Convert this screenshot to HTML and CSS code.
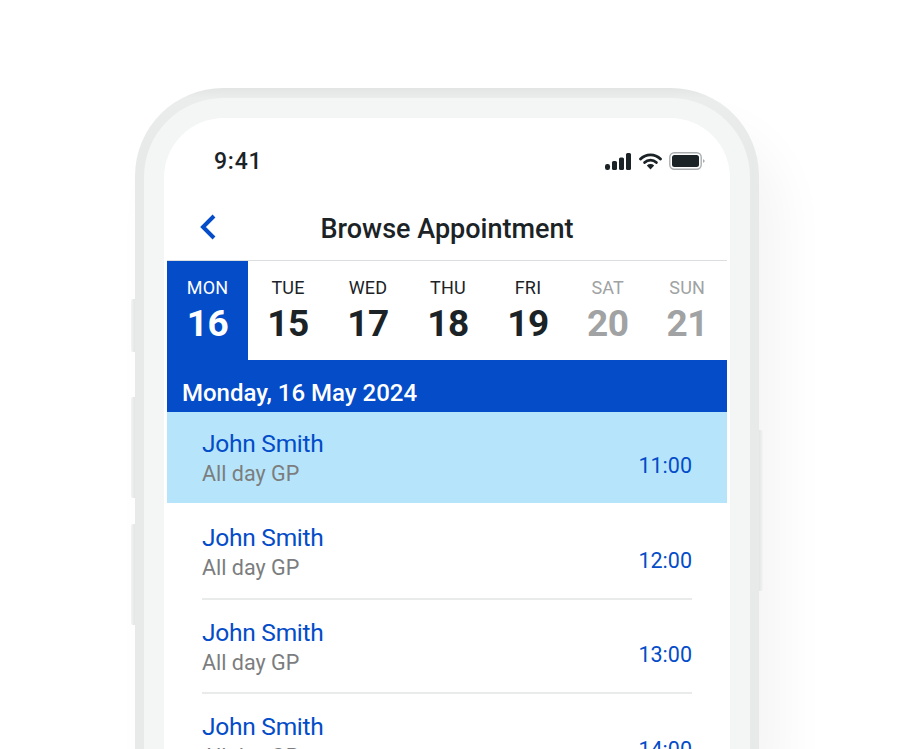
FILE: index.html
```html
<!DOCTYPE html>
<html lang="en">
<head>
    <meta charset="UTF-8">
    <meta name="viewport" content="width=device-width, initial-scale=1.0">
    <title>Browse Appointment</title>
    <link rel="stylesheet" href="styles.css">
</head>
<body>
    <div class="phone">
        <span class="side-button side-mute"></span>
        <span class="side-button side-up"></span>
        <span class="side-button side-down"></span>
        <span class="side-button side-power"></span>
        <div class="bezel">
            <div class="screen">
                <div class="status-bar">
                    <span class="clock">9:41</span>
                    <div class="status-icons">
                        <svg width="27" height="17" viewBox="0 0 27 17">
                            <rect x="0" y="11" width="5" height="6" rx="2.2" fill="#1b2327"/>
                            <rect x="7" y="8" width="5" height="9" rx="1.5" fill="#1b2327"/>
                            <rect x="14" y="4.5" width="5" height="12.5" rx="1.5" fill="#1b2327"/>
                            <rect x="21" y="0" width="5" height="17" rx="1.5" fill="#1b2327"/>
                        </svg>
                        <svg width="23" height="17" viewBox="0 0 23 17">
                            <path d="M1.5 6 A14 14 0 0 1 21.5 6" fill="none" stroke="#1b2327" stroke-width="2.8" stroke-linecap="round"/>
                            <path d="M5.6 9.6 A8.5 8.5 0 0 1 17.4 9.6" fill="none" stroke="#1b2327" stroke-width="2.8" stroke-linecap="round"/>
                            <path d="M7.8 12.4 L11.5 16.6 L15.2 12.4 A5.4 5.4 0 0 0 7.8 12.4 Z" fill="#1b2327"/>
                        </svg>
                        <svg width="36" height="18" viewBox="0 0 36 18">
                            <rect x="0.8" y="0.8" width="31.4" height="16.4" rx="4.5" fill="none" stroke="#a9adae" stroke-width="1.4"/>
                            <rect x="3" y="3" width="27" height="12" rx="2.5" fill="#1b2327"/>
                            <path d="M34 7 L36 9 L34 11 Z" fill="#a9adae"/>
                        </svg>
                    </div>
                </div>

                <div class="title-bar">
                    <svg class="back" width="18" height="28" viewBox="0 0 18 28">
                        <path d="M15 3 L4 14 L15 25" fill="none" stroke="#044cc8" stroke-width="4"/>
                    </svg>
                    <h1>Browse Appointment</h1>
                </div>

                <div class="content">
                    <div class="week">
                        <div class="day active"><span class="day-name">MON</span><span class="day-num">16</span></div>
                        <div class="day"><span class="day-name">TUE</span><span class="day-num">15</span></div>
                        <div class="day"><span class="day-name">WED</span><span class="day-num">17</span></div>
                        <div class="day"><span class="day-name">THU</span><span class="day-num">18</span></div>
                        <div class="day"><span class="day-name">FRI</span><span class="day-num">19</span></div>
                        <div class="day weekend"><span class="day-name">SAT</span><span class="day-num">20</span></div>
                        <div class="day weekend"><span class="day-name">SUN</span><span class="day-num">21</span></div>
                    </div>

                    <div class="date-band">Monday, 16 May 2024</div>

                    <div class="slot selected">
                        <div class="slot-info">
                            <div class="doctor">John Smith</div>
                            <div class="speciality">All day GP</div>
                        </div>
                        <div class="time">11:00</div>
                    </div>
                    <div class="slot">
                        <div class="slot-info">
                            <div class="doctor">John Smith</div>
                            <div class="speciality">All day GP</div>
                        </div>
                        <div class="time">12:00</div>
                    </div>
                    <div class="slot">
                        <div class="slot-info">
                            <div class="doctor">John Smith</div>
                            <div class="speciality">All day GP</div>
                        </div>
                        <div class="time">13:00</div>
                    </div>
                    <div class="slot">
                        <div class="slot-info">
                            <div class="doctor">John Smith</div>
                            <div class="speciality">All day GP</div>
                        </div>
                        <div class="time">14:00</div>
                    </div>
                </div>
            </div>
        </div>
    </div>
</body>
</html>
```

FILE: styles.css
```css
body {
    margin: 0;
    height: 749px;
    overflow: hidden;
    background-color: #fff;
    font-family: Roboto, "Liberation Sans", sans-serif;
    color: #1b2327;
}

.phone {
    position: relative;
    box-sizing: border-box;
    width: 624px;
    height: 661px;
    margin: 88px 0 0 135px;
    padding: 10px 9px 0;
    background: linear-gradient(to bottom, #e3e5e5, #ebecec 10px, #e8e9e9 60px);
    border-radius: 88px 88px 0 0;
    box-shadow: 24px 40px 50px rgba(0,0,0,0.045);
}

.side-button {
    position: absolute;
    width: 4px;
}

.side-mute, .side-up, .side-down {
    left: -4px;
    background: linear-gradient(to right, #f3f4f4, #e3e4e4);
    border-radius: 2px 0 0 2px;
}

.side-mute {
    top: 211px;
    height: 53px;
}

.side-up {
    top: 309px;
    height: 101px;
}

.side-down {
    top: 436px;
    height: 101px;
}

.side-power {
    right: -4px;
    top: 342px;
    height: 161px;
    background: linear-gradient(to right, #e3e4e4, #f3f4f4);
    border-radius: 0 2px 2px 0;
}

.bezel {
    box-sizing: border-box;
    height: 100%;
    padding: 20px 20px 0;
    background-color: #f4f6f6;
    border-radius: 79px 79px 0 0;
}

.screen {
    box-sizing: border-box;
    height: 100%;
    padding: 0 3px;
    background-color: #fff;
    border-radius: 60px 60px 0 0;
    overflow: hidden;
}

.status-bar {
    display: flex;
    justify-content: space-between;
    align-items: center;
    height: 28px;
    padding: 29px 22px 0 47px;
}

.clock {
    font-size: 23px;
    font-weight: 500;
    letter-spacing: 0.8px;
}

.status-icons {
    display: flex;
    align-items: center;
    gap: 7px;
}

.title-bar {
    position: relative;
    display: flex;
    justify-content: center;
    align-items: center;
    box-sizing: border-box;
    height: 86px;
    padding-top: 23px;
    border-bottom: 1px solid #dcdedf;
}

.title-bar h1 {
    margin: 0;
    font-size: 27px;
    font-weight: 500;
}

.back {
    position: absolute;
    left: 32px;
    top: 38px;
}

.week {
    display: flex;
    height: 99px;
}

.day {
    flex: 0 0 80px;
    display: flex;
    flex-direction: column;
    align-items: center;
    padding-top: 16px;
    box-sizing: border-box;
}

.day.active {
    flex-basis: 81px;
    background-color: #044cc8;
    color: #fff;
}

.day.weekend {
    flex-basis: 79.5px;
    color: #a0a2a3;
}

.day-name {
    font-size: 18px;
    line-height: 22px;
    letter-spacing: 0.2px;
}

.day-num {
    font-size: 37px;
    font-weight: 700;
    line-height: 50px;
    letter-spacing: -0.6px;
}

.date-band {
    box-sizing: border-box;
    height: 52px;
    padding: 18px 15px 0;
    background-color: #044cc8;
    color: #fff;
    font-size: 24px;
    font-weight: 500;
    line-height: 30px;
}

.slot {
    display: flex;
    justify-content: space-between;
    box-sizing: border-box;
    height: 94.5px;
    margin: 0 35px;
    padding-top: 17px;
    border-top: 2px solid #e9eaea;
}

.slot.selected {
    height: 91px;
    margin: 0;
    padding: 16px 35px 0;
    border-top: 0;
    background-color: #b6e5fb;
}

.slot.selected + .slot {
    border-top: 0;
    padding-top: 19px;
}

.doctor {
    font-size: 24.5px;
    line-height: 31px;
    letter-spacing: -0.25px;
    color: #044cc8;
}

.speciality {
    font-size: 21.5px;
    line-height: 29px;
    color: #7b7d7e;
}

.time {
    margin-top: 23.5px;
    font-size: 21.5px;
    line-height: 30px;
    color: #044cc8;
}

.slot.selected .time {
    margin-top: 23px;
}
```
